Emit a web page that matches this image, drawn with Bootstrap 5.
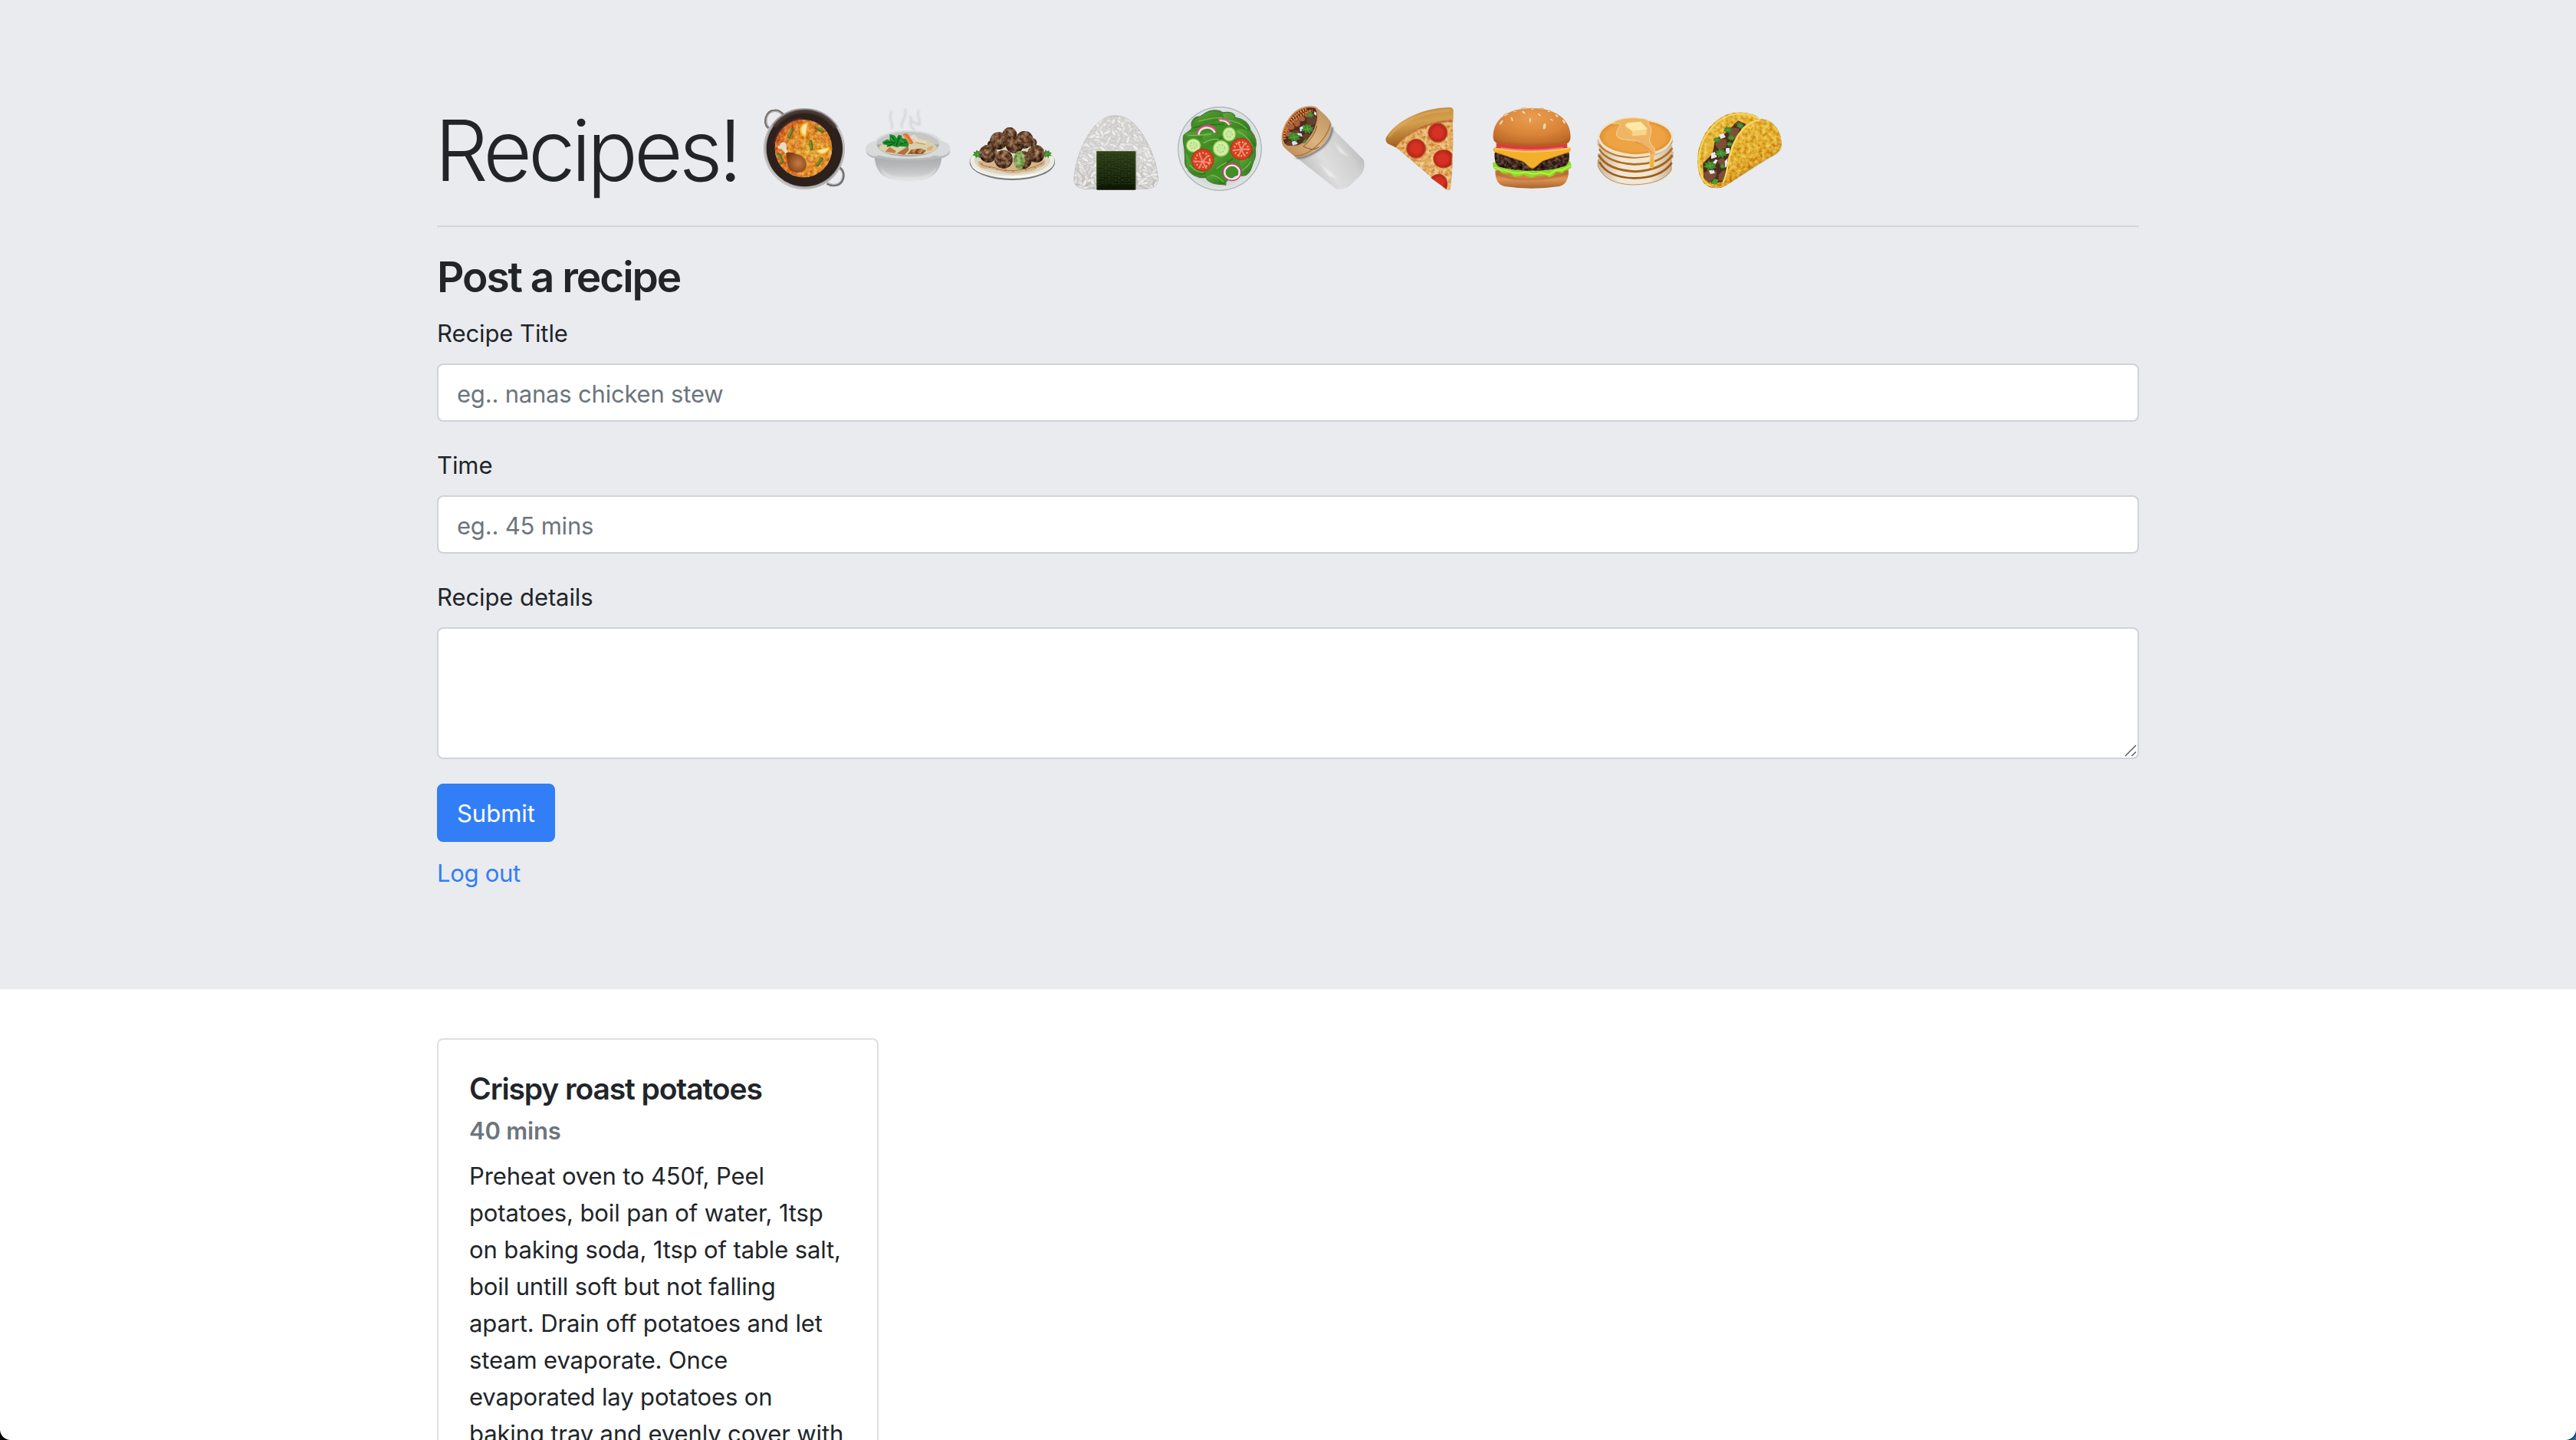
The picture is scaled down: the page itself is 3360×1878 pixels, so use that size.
<!DOCTYPE html>
<html lang="en">
<head>
<meta charset="utf-8">
<meta name="viewport" content="width=device-width, initial-scale=1">
<title>Recipes!</title>
<link href="https://cdn.jsdelivr.net/npm/bootstrap@5.3.0/dist/css/bootstrap.min.css" rel="stylesheet">
<style>
:root{font-size:32px}
body{font-family:Inter,"Liberation Sans",sans-serif;color:#212529;background:#fff;height:1878px;overflow:hidden;line-height:48px}
.page-wrap{width:2280px;max-width:2280px;padding:0 30px}
.hero{background:#eaebef;padding:128px 0;height:1290px}
.hero-title{height:134px;margin:0 0 32px;font-size:110px;line-height:134px;font-weight:330}
.hero-word{width:423px;white-space:nowrap;letter-spacing:-5.1px;padding-top:1px;text-indent:-3px}
.food-row{gap:23.5px;padding-top:10px}
.food-row svg{width:112px;height:112px;flex:none;display:block}
.rule{height:2px;background:#d2d4d8;margin-bottom:32px}
.sub-title{font-size:55px;line-height:67px;margin:0 0 15px;font-weight:590;letter-spacing:-2.05px}
.form-label{margin-bottom:15px;padding-top:1px;font-size:31px;display:block;line-height:48px;letter-spacing:-.08px}
.form-control,.form-control:focus{font-size:31px;line-height:48px;height:76px;padding:13px 24px 11px;border:2px solid #ced4d8;border-radius:8px;color:#495057;box-shadow:none;letter-spacing:-.2px}
.form-control::placeholder{color:#6c757d;opacity:1}
textarea.form-control{height:172px;resize:none;display:block}
.grip{right:3px;bottom:3px;width:16px;height:16px}
.btn-primary{--bs-btn-bg:#327ef6;--bs-btn-border-color:#327ef6;font-size:31px;line-height:48px;width:154px;height:76px;padding:13px 0 11px;border-width:2px;border-radius:8px}
.log-link{color:#327ef6;font-size:31px;text-decoration:none;line-height:50px;letter-spacing:-.28px}
.recipe-card{width:576px;margin-top:64px;border:2px solid #dfdfdf;border-radius:8px}
.recipe-card .card-body{padding:40px}
.recipe-card .card-title{font-size:39px;line-height:48px;margin-bottom:12px;font-weight:590;letter-spacing:-1.1px}
.recipe-card .card-subtitle{font-size:31px;line-height:38px;margin:0 0 16px;color:#6c757d;font-weight:570;letter-spacing:-.2px}
.recipe-card .card-text{font-size:31px;line-height:48px;white-space:nowrap;letter-spacing:-.13px}
.win-corner{position:fixed;bottom:0;width:14px;height:14px}
.win-left{left:0;background:radial-gradient(circle at 100% 0,transparent 13.5px,#000 14.5px)}
.win-right{right:0;background:radial-gradient(circle at 0 0,transparent 13.5px,#173a58 14.5px,#2272ad 17px)}
</style>
<script src="https://cdn.jsdelivr.net/npm/bootstrap@5.3.0/dist/js/bootstrap.bundle.min.js"></script>
</head>
<body>
<svg width="0" height="0" class="position-absolute" aria-hidden="true">
  <defs>
    <filter id="grain" x="0" y="0" width="1" height="1" color-interpolation-filters="sRGB"><feTurbulence type="fractalNoise" baseFrequency=".07" numOctaves="3" seed="4" result="n"/><feColorMatrix in="n" type="matrix" values="0 0 0 1.5 -.22  0 0 0 1.5 -.22  0 0 0 1.5 -.22  0 0 0 0 1"/><feComposite in2="SourceAlpha" operator="in" result="t"/><feBlend in="t" in2="SourceGraphic" mode="soft-light"/></filter>
    <filter id="soft"><feGaussianBlur stdDeviation="3"/></filter>
    <linearGradient id="metal" x1="0" y1="0" x2="1" y2="1"><stop offset="0" stop-color="#8b8785"/><stop offset=".5" stop-color="#c4c2c1"/><stop offset="1" stop-color="#8e8b89"/></linearGradient>
    <radialGradient id="curry" cx=".6" cy=".55" r=".6"><stop offset="0" stop-color="#dda72f"/><stop offset=".6" stop-color="#e08a26"/><stop offset="1" stop-color="#cf6420"/></radialGradient>
    <radialGradient id="drum" cx=".6" cy=".55" r=".6"><stop offset="0" stop-color="#c77c44"/><stop offset="1" stop-color="#7e3c14"/></radialGradient>
    <linearGradient id="bowl" x1="0" y1="0" x2="0" y2="1"><stop offset="0" stop-color="#a3a5a6"/><stop offset=".5" stop-color="#b9bbbc"/><stop offset="1" stop-color="#dcdddd"/></linearGradient>
    <radialGradient id="ball" cx=".45" cy=".35" r=".65"><stop offset="0" stop-color="#8a5f40"/><stop offset=".6" stop-color="#62402a"/><stop offset="1" stop-color="#38200f"/></radialGradient>
    <linearGradient id="rice" x1="0" y1="0" x2="0" y2="1"><stop offset="0" stop-color="#d6d4d0"/><stop offset=".6" stop-color="#d8d7d6"/><stop offset="1" stop-color="#bdb8b5"/></linearGradient>
    <linearGradient id="nori" x1="0" y1="0" x2="0" y2="1"><stop offset="0" stop-color="#2c3f17"/><stop offset="1" stop-color="#0b1605"/></linearGradient>
    <radialGradient id="plate"><stop offset=".8" stop-color="#cdd4d3"/><stop offset=".93" stop-color="#dde2e2"/><stop offset="1" stop-color="#b4bcbb"/></radialGradient>
    <linearGradient id="leaf" x1="0" y1="0" x2="1" y2="1"><stop offset="0" stop-color="#5da83a"/><stop offset="1" stop-color="#2e7416"/></linearGradient>
    <radialGradient id="cuke"><stop offset="0" stop-color="#c4e79a"/><stop offset=".75" stop-color="#d3eeaa"/><stop offset="1" stop-color="#a4d260"/></radialGradient>
    <linearGradient id="foil" x1="0" y1=".8" x2="1" y2=".2"><stop offset="0" stop-color="#b0b0b1"/><stop offset=".4" stop-color="#dededf"/><stop offset=".7" stop-color="#d0d0d1"/><stop offset="1" stop-color="#a9a9aa"/></linearGradient>
    <linearGradient id="wrap" x1="0" y1="1" x2="1" y2="0"><stop offset="0" stop-color="#b98350"/><stop offset=".5" stop-color="#dcb580"/><stop offset="1" stop-color="#b88c5a"/></linearGradient>
    <linearGradient id="crust" x1="0" y1="0" x2=".25" y2="1"><stop offset="0" stop-color="#b7772c"/><stop offset=".45" stop-color="#d4a04d"/><stop offset="1" stop-color="#9c5a1c"/></linearGradient>
    <radialGradient id="pep"><stop offset=".5" stop-color="#d63223"/><stop offset="1" stop-color="#b5231a"/></radialGradient>
    <radialGradient id="bun" cx=".5" cy=".25" r=".75"><stop offset="0" stop-color="#eb9d4d"/><stop offset=".6" stop-color="#d98438"/><stop offset="1" stop-color="#b96426"/></radialGradient>
    <linearGradient id="bunb" x1="0" y1="0" x2="0" y2="1"><stop offset="0" stop-color="#b9682c"/><stop offset=".5" stop-color="#dd9555"/><stop offset="1" stop-color="#a96429"/></linearGradient>
    <radialGradient id="cake" cx=".5" cy=".5" r=".55"><stop offset="0" stop-color="#f0a544"/><stop offset=".75" stop-color="#eda343"/><stop offset="1" stop-color="#d78525"/></radialGradient>
    <linearGradient id="edge" x1="0" y1="0" x2="1" y2="0"><stop offset="0" stop-color="#c9b69c"/><stop offset=".3" stop-color="#f1e7d6"/><stop offset=".7" stop-color="#f1e6d2"/><stop offset="1" stop-color="#cbb595"/></linearGradient>
    <linearGradient id="shell" x1="0" y1="0" x2=".6" y2="1"><stop offset="0" stop-color="#e6bb36"/><stop offset=".6" stop-color="#e2ad2b"/><stop offset="1" stop-color="#d4921d"/></linearGradient>
    <clipPath id="riceClip"><path id="riceShape" d="M612 78C565 78 530 112 500 165C478 205 456 260 451 325C451 352 470 363 500 364L740 363C768 360 782 345 779 318C774 260 750 205 722 155C690 105 655 78 612 78Z"/></clipPath>
    <symbol id="herb" viewBox="0 0 60 50"><path d="M2 30L12 22L6 12L20 14L22 2L33 10L44 5L44 16L58 18L50 27L58 36L44 36L40 48L30 38L20 46L18 36Z" fill="#3c8a2b"/><path d="M12 28L46 24M28 12L32 36" stroke="#6bb552" stroke-width="2.5" fill="none"/></symbol>
  </defs>
</svg>

<header class="hero">
  <div class="container page-wrap">
    <h1 class="hero-title d-flex align-items-start"><span class="hero-word">Recipes!</span>
      <span class="food-row d-flex" role="img" aria-label="Food">
        <svg viewBox="39 39 336 336">
          <path d="M68 126C45 105 58 58 90 58C106 56 120 66 126 76" fill="none" stroke="#77726f" stroke-width="10"/><path d="M68 122C50 103 62 61 90 61C104 59 114 66 122 74" fill="none" stroke="#c9c7c6" stroke-width="3"/>
          <path d="M296 342C315 355 345 352 355 332C366 310 358 290 346 282" fill="none" stroke="#77726f" stroke-width="10"/><path d="M298 340C318 350 342 348 351 330C361 310 354 296 346 286" fill="none" stroke="#d2d0cf" stroke-width="3"/>
          <circle cx="207" cy="207" r="159" fill="url(#metal)"/><circle cx="207" cy="207" r="156" fill="none" stroke="#dddbd9" stroke-width="2"/>
          <circle cx="208" cy="206" r="149" fill="#2c211d"/><path d="M90 120A146 146 0 0 1 330 125" fill="none" stroke="#4a3b34" stroke-width="14" filter="url(#soft)"/>
          <ellipse cx="204" cy="206" rx="112" ry="113" fill="url(#curry)" filter="url(#grain)"/><path d="M96 190A112 112 0 0 1 200 95" stroke="#c95423" stroke-width="14" fill="none" opacity=".45" filter="url(#soft)"/>
          <g stroke="#66711f" stroke-width="13" stroke-linecap="round"><path d="M148 161L160 132M253 125L279 139M232 178L236 207M108 229L121 256M259 270L275 247"/></g>
          <g stroke="#8c9a38" stroke-width="4" stroke-linecap="round"><path d="M146 159L157 132M254 122L279 135M230 178L234 205M106 231L118 256M257 268L273 247"/></g>
          <path d="M222 105C180 102 180 160 213 161Z" fill="#f1b92e"/><path d="M218 110C190 110 190 150 211 154Z" fill="#f8e5a6"/><path d="M252 213C264 242 306 229 308 199Z" fill="#f1b92e"/><path d="M259 214C270 233 298 222 302 204Z" fill="#f8e5a6"/>
          <path d="M188 184C170 180 166 205 184 205M287 170C282 158 262 158 264 168M227 236C218 248 230 263 240 257" fill="none" stroke="#d8742d" stroke-width="11" stroke-linecap="round"/><path d="M186 183C174 182 170 198 180 203M285 166C280 158 268 158 266 164M226 238C221 248 230 257 238 255" fill="none" stroke="#efa35a" stroke-width="4" stroke-linecap="round"/>
          <path d="M118 208C100 212 98 194 112 194C112 178 134 176 136 190C140 200 134 205 144 220L134 226Z" fill="#e8dcc7"/>
          <path d="M136 224C147 215 162 224 185 230C213 238 220 266 213 283C204 301 170 305 153 291C138 276 140 248 136 224Z" fill="url(#drum)"/>
        </svg>
        <svg viewBox="445.5 39 336 336">
          <g fill="none" stroke="#c2c3c7" stroke-width="9" opacity=".5" filter="url(#soft)"><path d="M545 130C560 110 530 95 548 60M590 125C575 100 610 95 600 50M615 80C640 90 600 110 640 135M655 110C665 95 640 80 655 55M625 100L660 115"/></g>
          <path d="M480 225C480 280 500 315 545 326Q612 340 680 326C725 312 744 275 744 225Z" fill="url(#bowl)"/><path d="M505 275C520 312 560 318 612 318S705 312 722 275C715 320 680 334 612 334S510 320 505 275Z" fill="#e6e7e7" opacity=".6" filter="url(#soft)"/>
          <path d="M446 205C448 190 462 180 484 176C500 150 550 136 612 136S725 150 742 176C764 180 776 190 777 207C777 228 758 235 738 240C720 232 714 239 700 243Q612 256 526 243C508 232 496 240 482 241C460 237 446 228 446 205Z" fill="#d9dadb"/>
          <path d="M448 212C452 230 468 235 484 236C500 228 512 238 526 239Q612 252 700 239C714 228 725 236 738 236C760 233 772 225 776 212C779 230 760 240 738 245Q612 262 484 244C462 240 448 232 448 212Z" fill="#b8babb"/>
          <ellipse cx="611" cy="190" rx="122" ry="48" fill="#a9abab"/><path d="M489 190A122 48 0 0 1 733 190" fill="#c6c7c4"/><path d="M496 205C510 178 550 164 612 164S712 178 727 204C708 225 670 232 612 232S516 225 496 205Z" fill="#d9cfa9"/>
          <path d="M635 182L640 166L685 178L683 195Z" fill="#e6d8bb"/><path d="M640 182L680 190" stroke="#b39c74" stroke-width="4"/><path d="M685 205L700 196L712 198L702 213L688 216Z" fill="#d7ae81"/>
          <path d="M522 218L540 200L565 216L560 224Z" fill="#c67e45"/><path d="M566 226L612 197L615 212L598 231Z" fill="#b66f3e"/><path d="M610 228L625 211L660 206L682 214L668 228Z" fill="#a96a38" filter="url(#grain)"/>
          <path d="M612 164C630 155 640 140 650 172Z" fill="#e9e6dc" opacity=".6"/><path d="M591 152C598 144 609 146 614 154L633 184Q626 192 616 187Z" fill="#ea6f2c"/><path d="M596 154L620 183" stroke="#f59a56" stroke-width="4"/>
          <path d="M512 180L530 170L540 174L540 150L560 155L567 166L574 152L587 155L588 166L603 168L615 188L612 200L580 197L570 202L550 196L530 200L528 192L514 190Z" fill="#1b8b2c"/><path d="M520 184L560 180L548 158M565 196L578 160M580 190L606 180M535 195L560 184" stroke="#0c5b1c" stroke-width="4" fill="none"/><path d="M545 165L558 180M580 172L596 184" stroke="#4dc058" stroke-width="3"/>
        </svg>
        <svg viewBox="42 39 336 336">
          <ellipse cx="211" cy="259" rx="167" ry="71" fill="#74797c"/><ellipse cx="211" cy="255" rx="165" ry="69" fill="#ecebdf"/><ellipse cx="211" cy="252" rx="148" ry="58" fill="#dad6c3"/><path d="M50 270Q100 322 211 321T372 270Q350 310 211 315T50 270Z" fill="#fffef6"/>
          <path d="M78 255C75 275 95 290 120 284C140 292 155 288 170 297C195 305 230 305 255 297C280 300 300 290 315 280C335 278 345 265 338 250Z" fill="#d5b48b"/><path d="M84 262C95 280 130 275 150 284S200 295 240 290S310 275 334 260" fill="none" stroke="#a5794f" stroke-width="3"/><path d="M90 266h4M120 280h4M150 290h4M182 291h5M212 296h5M262 289h5M298 281h4M322 266h4" stroke="#cd4a31" stroke-width="4"/>
          <use href="#herb" x="54" y="206" width="44" height="44"/><use href="#herb" x="325" y="204" width="42" height="46"/>
          <g filter="url(#grain)"><circle cx="201" cy="151" r="28" fill="url(#ball)"/><circle cx="130" cy="190" r="16" fill="url(#ball)"/><circle cx="291" cy="182" r="16" fill="url(#ball)"/><circle cx="259" cy="172" r="34" fill="url(#ball)"/><circle cx="158" cy="176" r="34" fill="url(#ball)"/><circle cx="220" cy="190" r="35" fill="url(#ball)"/><circle cx="117" cy="226" r="35" fill="url(#ball)"/><circle cx="304" cy="227" r="34" fill="url(#ball)"/><circle cx="177" cy="248" r="36" fill="url(#ball)"/><circle cx="252" cy="251" r="35" fill="url(#ball)"/><ellipse cx="239" cy="251" rx="22" ry="35" fill="#7ea150"/></g>
          <g fill="#a7813a"><circle cx="147" cy="158" r="3"/><circle cx="168" cy="168" r="2.5"/><circle cx="104" cy="212" r="3"/><circle cx="265" cy="152" r="3"/><circle cx="205" cy="180" r="2.5"/><circle cx="182" cy="230" r="3"/><circle cx="302" cy="212" r="3"/><circle cx="248" cy="165" r="2.5"/></g>
        </svg>
        <svg viewBox="448.5 39 336 336">
          <use href="#riceShape" fill="url(#rice)" stroke="#b9b3ae" stroke-width="3"/><g id="riceGrains" clip-path="url(#riceClip)"></g>
          <rect x="539" y="216" width="154" height="152" rx="4" fill="url(#nori)"/><path id="noriRidges" fill="none" stroke="#50642f" stroke-width="2.5" opacity=".55"/><path d="M541 365V218H691V365" fill="none" stroke="#6d7f3d" stroke-width="2.5" opacity=".7"/>
        </svg>
        <svg viewBox="45 39 336 336">
          <circle cx="213" cy="207" r="164" fill="url(#plate)" stroke="#aab3b2" stroke-width="2"/><circle cx="213" cy="207" r="158" fill="none" stroke="#eef1f1" stroke-width="3"/>
          <path d="M150 72C180 50 210 55 225 66C250 60 275 68 272 85C300 88 328 105 333 135C350 155 360 180 352 205C352 225 356 240 345 255C338 275 335 300 315 310C290 318 280 300 262 320C240 325 235 335 236 348C205 345 170 345 158 318C130 325 95 305 88 285C70 270 80 245 76 225C78 200 65 180 72 155C85 140 100 140 105 125C95 100 115 80 135 82Z" fill="#438e25" stroke="#4f7340" stroke-width="4"/>
          <g fill="url(#leaf)"><path d="M140 82C175 50 210 60 226 80C205 105 155 110 125 115C105 105 125 85 140 82Z"/><path d="M225 70C260 60 275 75 270 95C300 95 330 110 330 138C300 120 260 130 235 110Z"/><path d="M75 150C110 130 140 145 190 145C170 165 130 165 110 175C95 165 80 160 75 150Z"/><path d="M275 135C310 120 350 150 355 200C330 190 310 165 280 170Z"/><path d="M150 150C180 130 220 150 225 180C190 200 160 190 140 200Z"/><path d="M80 225C100 240 90 280 158 300C150 320 95 310 86 284Z"/><path d="M190 245C215 230 240 240 250 260C225 280 200 290 175 300C165 280 190 265 190 245Z"/><path d="M290 250C320 240 345 235 348 250C335 290 330 305 300 305Z"/><path d="M160 318C180 300 210 305 236 346C205 345 170 342 160 318Z"/></g>
          <path d="M130 100Q180 85 222 85M90 155Q130 155 180 150M285 140Q320 155 340 195M150 185Q190 160 222 175M95 270Q120 300 150 300M180 310Q210 315 228 338M200 285Q220 270 240 260M300 292Q325 275 335 255M240 95Q290 100 320 130" fill="none" stroke="#82c55c" stroke-width="4" opacity=".8"/><path d="M110 125Q170 110 230 112M95 175Q115 185 140 205M235 150L210 172M265 245L240 262M160 260L190 240M345 215L325 245" fill="none" stroke="#22600f" stroke-width="6" opacity=".5"/>
          <path d="M126 152C130 108 190 108 197 140" fill="none" stroke="#d54a87" stroke-width="9"/><path d="M130 152C134 118 182 116 194 144" fill="none" stroke="#f5e4ec" stroke-width="8"/><path d="M206 92C228 88 250 95 256 112" fill="none" stroke="#d95a92" stroke-width="7"/><path d="M212 97C230 96 244 103 250 114" fill="none" stroke="#f5e4ec" stroke-width="6"/>
          <g stroke="#6fae37" stroke-width="3" fill="url(#cuke)"><ellipse cx="250" cy="150" rx="26" ry="28"/><ellipse cx="110" cy="194" rx="29" ry="27"/><circle cx="218" cy="206" r="32"/></g><g fill="none" stroke="#93cc69" stroke-width="4" stroke-dasharray="5 7"><circle cx="250" cy="150" r="12"/><circle cx="110" cy="194" r="13"/><circle cx="218" cy="206" r="15"/></g>
          <g fill="#d83d27" stroke="#b52d1b" stroke-width="3"><circle cx="146" cy="251" r="43"/><circle cx="297" cy="208" r="42"/></g><g fill="none" stroke="#f0cb65" stroke-width="7" stroke-dasharray="5 8"><circle cx="146" cy="251" r="28"/><circle cx="297" cy="208" r="27"/></g><g stroke="#f08f75" stroke-width="6" stroke-linecap="round"><path d="M146 258L134 228M146 258L165 235M146 258L112 256M146 258L178 262M146 258L132 282M146 258L160 282M297 210L285 182M297 210L312 185M297 210L266 214M297 210L328 208M297 210L287 236M297 210L310 234"/></g>
          <ellipse cx="261" cy="298" rx="34" ry="32" fill="none" stroke="#c24379" stroke-width="7"/><ellipse cx="261" cy="299" rx="29" ry="27" fill="none" stroke="#f4e8ee" stroke-width="7"/>
        </svg>
        <svg viewBox="451.5 39 336 336">
          <path d="M650 105C645 118 655 132 662 137L774 250C785 285 765 315 741 330C725 352 700 370 668 365L510 240L560 232Z" fill="url(#foil)"/><path d="M652 122Q648 180 592 215T510 240" fill="none" stroke="#747371" stroke-width="8" filter="url(#soft)"/><path d="M660 180L720 240L680 220ZM600 260L670 320L640 315ZM700 270L740 300" fill="#fff" opacity=".5" filter="url(#soft)"/>
          <path d="M455 185C450 160 458 135 470 110C495 60 540 40 590 45C600 55 640 85 648 108C645 150 625 185 600 205C570 228 530 245 505 238C485 218 460 205 455 185Z" fill="url(#wrap)"/>
          <path d="M464 190C448 165 458 125 485 88C515 45 555 38 586 46C598 60 598 90 589 115C575 160 545 185 520 195C495 200 475 200 464 190Z" fill="#4f2c1e" stroke="#c99560" stroke-width="6"/>
          <g fill="none" stroke="#d4722f" stroke-width="13" stroke-dasharray="6 4"><path d="M464 170C462 130 495 65 555 51M474 148C482 110 515 75 575 58"/></g><g fill="none" stroke="#f0a766" stroke-width="4" stroke-dasharray="4 8"><path d="M463 160C466 125 495 70 550 53M478 128C490 105 525 72 572 56"/></g>
          <g fill="#a8603d"><ellipse cx="490" cy="122" rx="14" ry="10"/><ellipse cx="514" cy="107" rx="12" ry="14"/><ellipse cx="532" cy="90" rx="13" ry="10"/><ellipse cx="482" cy="150" rx="13" ry="10"/><ellipse cx="553" cy="75" rx="9" ry="9"/></g><g fill="#65402f"><path d="M550 90l24-14 16 8-4 28-30 4zM532 158l16-12 18 6-14 24zM470 185l16-12 10 18-20 4zM500 135l22 0-4 14-24-2z"/></g>
          <g fill="#dde3f4"><path d="M524 124l18-9 6 15-22 10zM493 180l16-6 8 14-20 6zM582 60l8 6v12l-10-6zM515 145l16 2 4 12-18-2z"/></g>
          <use href="#herb" x="474" y="138" width="56" height="46"/><use href="#herb" x="528" y="104" width="54" height="50"/><use href="#herb" x="549" y="60" width="32" height="30"/><path d="M538 175l14-8-2 16-12 4z" fill="#4b8e35"/><path d="M538 197Q575 220 600 200M592 118Q580 165 538 198" stroke="#7e5330" stroke-width="3" fill="none"/><path d="M505 235C550 238 625 185 645 110" fill="none" stroke="#8d5f35" stroke-width="4" opacity=".7"/>
        </svg>
        <svg viewBox="48 39 336 336">
          <path d="M88 197C130 145 220 95 314 94C318 190 315 280 305 366Q298 372 288 366Z" fill="#e3af63" filter="url(#grain)"/><path d="M88 197C130 145 220 97 314 98" fill="none" stroke="#b54a1c" stroke-width="7" filter="url(#soft)"/>
          <g fill="#c6611f" opacity=".8"><circle cx="180" cy="150" r="3"/><circle cx="205" cy="160" r="3"/><circle cx="135" cy="185" r="3"/><circle cx="225" cy="215" r="3.5"/><circle cx="215" cy="275" r="3"/><circle cx="290" cy="195" r="3"/><circle cx="240" cy="290" r="3"/><circle cx="300" cy="120" r="3"/><circle cx="190" cy="255" r="3"/><circle cx="260" cy="195" r="3"/><circle cx="200" cy="125" r="3"/><circle cx="305" cy="300" r="3"/><circle cx="272" cy="296" r="3"/><circle cx="122" cy="205" r="3"/></g>
          <path d="M92 202L60 187Q48 176 54 163C90 100 190 48 300 45Q317 46 317 56V88Q317 95 308 94C210 97 130 145 92 202Z" fill="url(#crust)"/><path d="M64 160C110 100 190 62 306 56" fill="none" stroke="#e3b667" stroke-width="8" opacity=".6" filter="url(#soft)"/>
          <g stroke="#a1441a" stroke-width="2"><circle cx="256" cy="145" r="38" fill="#e9a85a"/><circle cx="172" cy="207" r="38" fill="#e9a85a"/><circle cx="256" cy="144" r="36" fill="url(#pep)"/><circle cx="171" cy="206" r="36" fill="url(#pep)"/><path d="M311 226C295 202 240 208 239 246C240 284 290 292 309 268Z" fill="url(#pep)"/><path d="M230 321C245 302 280 300 291 330Q296 350 290 364Z" fill="url(#pep)"/></g>
        </svg>
        <svg viewBox="454.5 39 336 336">
          <path d="M480 292Q478 345 515 354Q622 370 730 354Q768 345 766 290Z" fill="url(#bunb)"/><path d="M482 305Q520 318 560 325Q650 335 766 302" stroke="#9d5220" stroke-width="8" fill="none" opacity=".5" filter="url(#soft)"/>
          <path d="M480 200H762V222H484Z" fill="#852d16"/><path d="M484 186H760Q766 212 740 214Q622 228 505 214Q480 210 484 186Z" fill="#e0393f"/><path d="M500 204Q622 222 745 203" stroke="#f27577" stroke-width="6" fill="none"/>
          <path d="M470 262L482 258L500 275L760 262L768 254Q778 258 777 282Q768 285 764 292Q752 288 744 302Q730 300 718 298Q705 318 690 318Q675 306 662 312Q640 308 626 320Q605 318 590 308Q570 318 550 316Q545 302 530 304Q510 305 502 300Q495 288 483 290Q468 285 470 262Z" fill="#8fdc22"/><path d="M475 280Q490 280 500 290Q530 292 545 300Q575 306 600 298Q630 312 655 300Q680 305 692 308Q715 285 740 292Q760 278 775 275" fill="none" stroke="#c1f45f" stroke-width="4"/>
          <path d="M478 222H768Q772 262 755 274Q700 293 622 293T492 276Q474 262 478 222Z" fill="#38211a" filter="url(#grain)"/><g fill="none" stroke="#74503e" stroke-width="4" opacity=".6"><path d="M490 236q8 12 0 24M515 248q14 6 4 22M548 258q12 8 8 20M700 258q12-10 22 0M680 274q10-8 24-2M740 240q14 8 4 24M585 276q14-6 18 6"/></g>
          <path d="M474 203Q622 228 772 202Q778 210 772 218L665 254L634 281Q624 288 612 278L588 256L474 218Q468 210 474 203Z" fill="#f3b02c"/><path d="M478 205Q622 232 768 205" stroke="#fdd05c" stroke-width="5" fill="none"/><path d="M478 220L590 257L614 278Q624 286 634 279L664 255L768 220" stroke="#d98a18" stroke-width="3" fill="none"/>
          <path d="M471 160C471 90 530 48 622 48S774 90 774 160Q774 186 752 190Q622 208 492 188Q471 182 471 160Z" fill="url(#bun)"/><path d="M478 172Q490 188 530 188Q622 200 730 188Q765 182 770 165" stroke="#a24f1d" stroke-width="5" fill="none" opacity=".6" filter="url(#soft)"/>
          <g fill="#f1d5a8" stroke="#b97636" stroke-width="1.5"><ellipse cx="503" cy="104" rx="5" ry="12" transform="rotate(35 503 104)"/><ellipse cx="545" cy="91" rx="5" ry="10" transform="rotate(-15 545 91)"/><ellipse cx="616" cy="95" rx="5" ry="11"/><ellipse cx="672" cy="119" rx="7" ry="13" transform="rotate(10 672 119)"/><ellipse cx="591" cy="65" rx="5" ry="10" transform="rotate(-50 591 65)"/><ellipse cx="652" cy="74" rx="4" ry="10" transform="rotate(-45 652 74)"/><ellipse cx="700" cy="94" rx="4" ry="8" transform="rotate(-60 700 94)"/><ellipse cx="720" cy="78" rx="5" ry="8" transform="rotate(-45 720 78)"/><ellipse cx="748" cy="101" rx="5" ry="10" transform="rotate(-35 748 101)"/><ellipse cx="522" cy="74" rx="11" ry="4" transform="rotate(-25 522 74)"/><ellipse cx="557" cy="61" rx="9" ry="3" transform="rotate(-20 557 61)"/><ellipse cx="592" cy="50" rx="10" ry="3"/><ellipse cx="625" cy="52" rx="6" ry="4"/><ellipse cx="662" cy="51" rx="7" ry="3"/><ellipse cx="690" cy="61" rx="7" ry="4"/></g>
        </svg>
        <svg viewBox="51 39 336 336">
          <path d="M73 250V275Q100 345 210 348Q330 345 360 290V250Z" fill="url(#edge)" stroke="#a36420" stroke-width="2"/>
          <path d="M78 258Q110 320 215 322Q320 322 362 262" fill="none" stroke="#9a5a1a" stroke-width="8"/><path d="M72 225V238Q100 305 220 310Q330 305 368 240V218Z" fill="url(#edge)"/><path d="M76 232Q110 292 220 296Q325 290 364 232" fill="none" stroke="#a8641c" stroke-width="9"/><path d="M78 200V210Q100 282 220 288Q330 280 364 218V195Z" fill="url(#edge)"/><path d="M78 208Q110 262 215 268Q320 268 364 205" fill="none" stroke="#b06d20" stroke-width="8"/>
          <path d="M71 170V190Q95 255 215 262Q340 255 366 180V158Z" fill="url(#edge)"/><path d="M78 190Q110 238 215 242Q320 240 362 180" fill="none" stroke="#bd7a28" stroke-width="6"/><path d="M71 160C78 115 130 87 215 86C310 92 362 120 367 158C360 215 300 238 215 239C130 230 80 210 71 160Z" fill="#efe2c9"/>
          <path d="M79 160C86 120 140 93 215 94C300 98 354 120 360 160C352 205 300 226 215 229C135 220 88 200 79 160Z" fill="url(#cake)"/>
          <path d="M130 108C150 85 220 82 260 92C280 100 262 110 278 120C285 140 276 155 274 175Q278 190 294 205Q302 225 292 240V276Q284 288 276 277V228C276 205 245 195 230 178C195 168 150 178 145 150C145 130 165 115 158 108Z" fill="#eeb567" stroke="#f9d591" stroke-width="3"/><path d="M278 250V276Q284 286 291 275V248Z" fill="#eeb33a"/><path d="M218 180Q260 190 284 225" stroke="#e18c45" stroke-width="7" fill="none" opacity=".6"/>
          <path d="M177 118Q176 108 188 104L240 99Q248 99 252 105L267 126V145Q267 153 258 155L212 160Q204 160 200 154L179 132Z" fill="#efb964"/><path d="M180 118Q180 109 190 106L240 101L266 128L262 132L207 138Z" fill="#ffe9a6"/><path d="M207 138L207 157L262 152L264 131Z" fill="#f7d58b"/>
        </svg>
        <svg viewBox="457.5 39 336 336">
          <path d="M512 358C470 345 455 280 463 225C475 150 530 75 610 66C650 62 690 70 706 95L600 220L565 345Q545 362 512 358Z" fill="url(#shell)" filter="url(#grain)"/><path d="M513 352C475 340 462 280 469 225C480 155 535 82 610 71C650 67 680 74 698 90" fill="none" stroke="#f7d65b" stroke-width="6"/>
          <path d="M484 300L482 265L520 225L530 170L565 150L620 98L650 110L600 190L590 240L572 300L560 335L520 345Z" fill="#4c2c1d"/>
          <g fill="#7d4e36" stroke="#50301e" stroke-width="2"><path d="M528 190l20-28 28 10-2 30-28 12zM582 148l14-26 30 6-10 34-26 10zM606 110l14-12 14 8-8 14zM486 300l20-12 32 6-4 22-26 24-22-20zM535 252l24-10 16 16-20 22zM541 310l20-20 12 4-10 38-18 2z"/></g>
          <g fill="#e6e9f5"><path d="M545 152l18-6 8 16-20 6zM572 205l14-2 2 22-18 2zM513 225l16-6 8 20-22 8zM568 255l12-12-4 34-8 4zM520 262l12-14 8 4-8 16zM505 292l20-2 4 12-18 4z"/></g>
          <use href="#herb" x="520" y="157" width="32" height="30"/><use href="#herb" x="560" y="112" width="38" height="42"/><use href="#herb" x="576" y="148" width="34" height="32"/><use href="#herb" x="604" y="103" width="48" height="28"/><use href="#herb" x="526" y="200" width="52" height="50"/><use href="#herb" x="480" y="250" width="60" height="46"/><use href="#herb" x="546" y="262" width="26" height="28"/><use href="#herb" x="572" y="175" width="28" height="28"/><path d="M512 345L526 324L544 328L536 344Z" fill="#4a9c31"/>
          <path d="M552 358C580 320 570 260 592 205C610 150 650 95 705 91C755 88 792 140 789 190C786 212 775 225 755 235C690 270 620 320 565 355Q545 365 512 358Q540 355 552 358Z" fill="url(#shell)" filter="url(#grain)"/><path d="M560 340C582 300 575 260 597 205C615 150 655 99 705 95" fill="none" stroke="#f8d95f" stroke-width="6"/><path d="M788 195C784 215 770 222 755 230L570 346" fill="none" stroke="#b97d16" stroke-width="5" opacity=".6" filter="url(#soft)"/>
        </svg>
      </span>
    </h1>
    <div class="rule"></div>
    <h3 class="sub-title">Post a recipe</h3>
    <form onsubmit="return false">
      <div class="mb-3"><label class="form-label" for="recipeTitle">Recipe Title</label><input id="recipeTitle" class="form-control" placeholder="eg.. nanas chicken stew"></div>
      <div class="mb-3"><label class="form-label" for="recipeTime">Time</label><input id="recipeTime" class="form-control" placeholder="eg.. 45 mins"></div>
      <div class="mb-3"><label class="form-label" for="recipeDetails">Recipe details</label>
        <div class="position-relative"><textarea id="recipeDetails" class="form-control"></textarea><svg class="grip position-absolute" viewBox="0 0 16 16"><path d="M1 15L15 1M9.500 15L15 9.500" stroke="#5c5c5e" stroke-width="1.500"/></svg></div>
      </div>
      <button class="btn btn-primary d-block" type="submit">Submit</button>
    </form>
    <a class="log-link d-inline-block mt-2" href="#">Log out</a>
  </div>
</header>
<main class="container page-wrap">
  <article class="card recipe-card"><div class="card-body">
    <h5 class="card-title">Crispy roast potatoes</h5>
    <h6 class="card-subtitle">40 mins</h6>
    <p class="card-text">Preheat oven to 450f, Peel<br>potatoes, boil pan of water, 1tsp<br>on baking soda, 1tsp of table salt,<br>boil untill soft but not falling<br>apart. Drain off potatoes and let<br>steam evaporate. Once<br>evaporated lay potatoes on<br>baking tray and evenly cover with</p>
  </div></article>
</main>
<div class="win-corner win-left"></div>
<div class="win-corner win-right"></div>
<script>
// Rice grains and seaweed ridges, laid out by a small repeatable random sequence.
let seed = 7;
const rnd = () => (seed = (seed * 16807) % 2147483647) / 2147483647;
let grains = '';
for (let y = 82; y < 372; y += 15) for (let x = 450; x < 785; x += 21) {
  const cx = (x + rnd() * 14).toFixed(0), cy = (y + rnd() * 10).toFixed(0), a = (rnd() * 150 - 75).toFixed(0);
  grains += `<ellipse cx="${cx}" cy="${cy}" rx="16" ry="6.5" transform="rotate(${a} ${cx} ${cy})" fill="${['#e3e2e1','#d9d8d7','#ececec'][Math.floor(rnd() * 3)]}" stroke="#bbb8b5" stroke-width="1.3"/>`;
}
document.getElementById('riceGrains').innerHTML = grains;
let ridges = '';
for (let y = 224; y < 350; y += 9) for (let x = 545; x < 680; x += 13) ridges += `M${x} ${(y + rnd() * 5).toFixed(0)}q4 ${(rnd() * 8 - 4).toFixed(0)} 9 0`;
document.getElementById('noriRidges').setAttribute('d', ridges);
</script>
</body>
</html>
